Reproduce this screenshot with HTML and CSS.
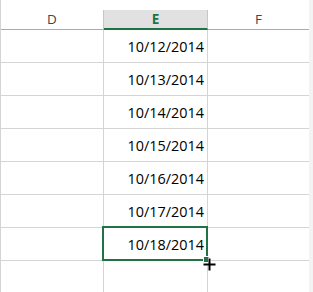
FILE: index.html
```html
<!DOCTYPE html>
<html>
<head>
<meta charset="utf-8">
<link rel="stylesheet" href="styles.css">
</head>
<body>
<div class="window">
  <div class="sheet">
    <div class="grid">
      <div class="hdr">D</div>
      <div class="hdr active">E</div>
      <div class="hdr last">F</div>

      <div class="cell"></div><div class="cell date">10/12/2014</div><div class="cell last"></div>
      <div class="cell"></div><div class="cell date">10/13/2014</div><div class="cell last"></div>
      <div class="cell"></div><div class="cell date">10/14/2014</div><div class="cell last"></div>
      <div class="cell"></div><div class="cell date">10/15/2014</div><div class="cell last"></div>
      <div class="cell"></div><div class="cell date">10/16/2014</div><div class="cell last"></div>
      <div class="cell"></div><div class="cell date">10/17/2014</div><div class="cell last"></div>
      <div class="cell"></div><div class="cell date selected">10/18/2014
        <span class="handle"></span>
        <svg class="cursor" width="15" height="15" viewBox="0 0 15 15">
          <path d="M6 0.5h3v5.5h5.5v3h-5.5v5.5h-3v-5.5h-5.5v-3h5.5z" fill="#fff"/>
          <path d="M6.5 1.5h2v5h5v2h-5v5h-2v-5h-5v-2h5z" fill="#000"/>
        </svg>
      </div><div class="cell last"></div>
      <div class="cell"></div><div class="cell"></div><div class="cell last"></div>
    </div>
  </div>
  <div class="scroll"></div>
</div>
</body>
</html>
```

FILE: styles.css
```css
html, body {
  margin: 0;
  padding: 0;
  background: #ffffff;
  overflow: hidden;
}
.window {
  display: flex;
  width: 313px;
  height: 292px;
  overflow: hidden;
}
.sheet {
  width: 309px;
  padding-top: 10px;
  border-left: 1px solid #d4d4d4;
  box-sizing: border-box;
}
.scroll {
  flex: 1;
  background: #f3f3f3;
}
.grid {
  display: grid;
  grid-template-columns: 103px 104px 101px;
  grid-auto-rows: 33px;
  grid-template-rows: 20px;
  font-family: "Open Sans", "Liberation Sans", sans-serif;
}
.hdr {
  box-sizing: border-box;
  border-right: 1px solid #c6c6c6;
  border-bottom: 1px solid #ababab;
  font-size: 13.5px;
  line-height: 19px;
  text-align: center;
  color: #444444;
}
.hdr.active {
  background: #e1e1e1;
  border-bottom: 2px solid #217346;
  color: #217346;
  font-weight: 700;
  line-height: 18px;
}
.hdr.last, .cell.last {
  border-right: none;
}
.cell {
  box-sizing: border-box;
  border-right: 1px solid #d4d4d4;
  border-bottom: 1px solid #d4d4d4;
  position: relative;
}
.date {
  display: flex;
  align-items: flex-end;
  justify-content: flex-end;
  padding: 0 3px 6px 0;
  font-size: 14.4px;
  line-height: 18px;
  color: #000000;
}
.selected::after {
  content: "";
  position: absolute;
  top: -2px;
  left: -2px;
  right: -1px;
  bottom: -1px;
  border: 2px solid #217346;
  pointer-events: none;
}
.handle {
  position: absolute;
  right: -3px;
  bottom: -3px;
  width: 5px;
  height: 5px;
  background: #217346;
  border: 1px solid #ffffff;
  z-index: 2;
}
.cursor {
  position: absolute;
  left: 98px;
  top: 29px;
  z-index: 3;
}
```
